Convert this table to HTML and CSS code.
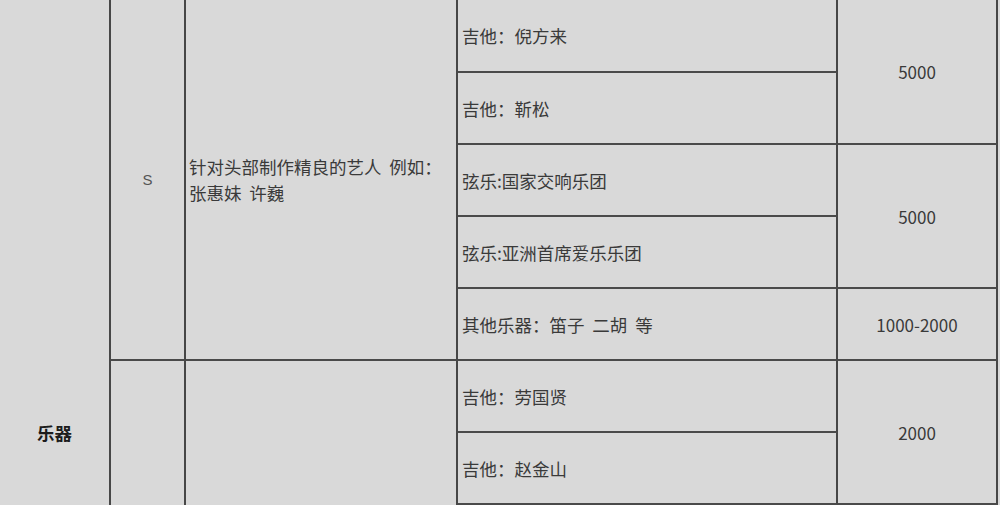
FILE: index.html
```html
<!DOCTYPE html>
<html lang="zh-CN">
<head>
<meta charset="utf-8">
<title>乐器</title>
<link rel="stylesheet" href="styles.css">
</head>
<body>
<div class="sheet">
  <div class="cell cat">乐器</div>
  <div class="cell level l1">S</div>
  <div class="cell desc d1">针对头部制作精良的艺人&nbsp;&nbsp;例如：<br>张惠妹&nbsp;&nbsp;许巍</div>
  <div class="cell item r1">吉他：倪方来</div>
  <div class="cell price p1">5000</div>
  <div class="cell item r2">吉他：靳松</div>
  <div class="cell item r3">弦乐:国家交响乐团</div>
  <div class="cell price p2">5000</div>
  <div class="cell item r4">弦乐:亚洲首席爱乐乐团</div>
  <div class="cell item r5">其他乐器：笛子&nbsp;&nbsp;二胡&nbsp;&nbsp;等</div>
  <div class="cell price p3">1000-2000</div>
  <div class="cell level l2 open"></div>
  <div class="cell desc d2 open"></div>
  <div class="cell item r6">吉他：劳国贤</div>
  <div class="cell price p4">2000</div>
  <div class="cell item r7">吉他：赵金山</div>
</div>
</body>
</html>
```

FILE: styles.css
```css
html, body {
  margin: 0;
  padding: 0;
  background: #d9d9d9;
  width: 1000px;
  height: 505px;
  overflow: hidden;
}

.sheet {
  display: grid;
  grid-template-columns: 111px 75px 272px 380px 160px;
  grid-template-rows: 73px repeat(6, 72px);
  height: 505px;
  font-family: "Noto Sans CJK SC", "Noto Sans", sans-serif;
  font-size: 17.5px;
  color: #3a3a3a;
}

.cell {
  box-sizing: border-box;
  border-right: 2px solid #474747;
  border-bottom: 2px solid #4a4a4a;
  display: flex;
  align-items: center;
  padding: 0 4px;
  white-space: nowrap;
  min-height: 0;
}

.open {
  border-bottom: none;
}

.cat {
  grid-column: 1;
  grid-row: 1 / span 7;
  justify-content: center;
  align-items: flex-end;
  padding-bottom: 60px;
  line-height: 24px;
  font-weight: bold;
  color: #1c1c1c;
  border-bottom: none;
}

.level {
  grid-column: 2;
  justify-content: center;
  font-family: "Liberation Sans", Arial, sans-serif;
  font-size: 15px;
  color: #555;
}
.l1 { grid-row: 1 / span 5; }
.l2 { grid-row: 6 / span 2; }

.desc {
  grid-column: 3;
  padding-left: 3px;
  line-height: 26px;
}
.d1 { grid-row: 1 / span 5; }
.d2 { grid-row: 6 / span 2; }

.item {
  grid-column: 4;
  padding-left: 4px;
}
.r1 { grid-row: 1; }
.r2 { grid-row: 2; }
.r3 { grid-row: 3; }
.r4 { grid-row: 4; }
.r5 { grid-row: 5; }
.r6 { grid-row: 6; }
.r7 { grid-row: 7; }

.price {
  grid-column: 5;
  justify-content: center;
  font-size: 17px;
}
.p1 { grid-row: 1 / span 2; }
.p2 { grid-row: 3 / span 2; }
.p3 { grid-row: 5; }
.p4 { grid-row: 6 / span 2; }
```
